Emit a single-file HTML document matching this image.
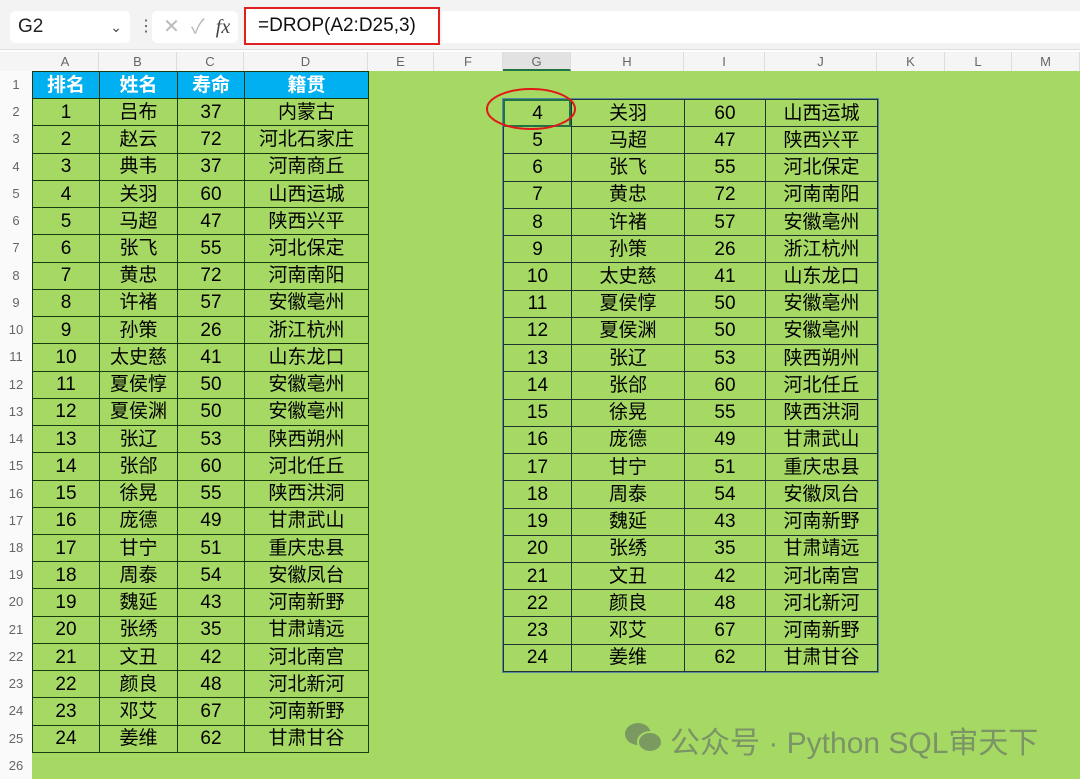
<!DOCTYPE html>
<html><head><meta charset="utf-8"><style>
*{margin:0;padding:0;box-sizing:border-box}
body{width:1080px;height:779px;overflow:hidden;background:#fff;font-family:"Liberation Sans","Noto Sans CJK SC",sans-serif;position:relative}
.top{position:absolute;left:0;top:0;width:1080px;height:50px;background:#f3f3f3;border-bottom:1px solid #ddd}
.nb{position:absolute;left:10px;top:11px;width:120px;height:32px;background:#fff;border-radius:5px;font-size:19px;line-height:32px;padding-left:8px;color:#222}
.nb span{position:absolute;right:8px;top:0;font-size:14px;color:#444}
.ic{position:absolute;left:152px;top:11px;width:86px;height:32px;background:#fff;border-radius:5px;color:#bbb;font-size:20px;line-height:32px}
.fx{position:absolute;left:244px;top:7px;width:196px;height:38px;background:#fff;border:2px solid #e02020;font-size:19px;line-height:34px;padding-left:12px;color:#111}
.fb{position:absolute;left:442px;top:11px;width:638px;height:32px;background:#fff}
.ch{position:absolute;top:52px;left:0;height:19px;width:1080px;background:#f5f5f5;font-size:13px;color:#666}
.ch div{position:absolute;top:0;height:19px;line-height:19px;text-align:center;border-right:1px solid #ddd}
.rh{position:absolute;left:0;top:71px;width:32px;height:708px;background:#fafafa;font-size:13px;color:#666}
.rh div{height:27.24px;line-height:27px;text-align:center}
.grid{position:absolute;left:32px;top:71px;width:1048px;height:708px;background:#a6d864}
table{position:absolute;border-collapse:collapse;font-size:19px;color:#000}
td{height:27.24px;text-align:center;border:1px solid #1a3a10;padding:0;line-height:25px}
.L{left:32px;top:71px}
.L tr:first-child td{background:#00b0f0;color:#fff;font-weight:bold}
.R{left:503px;top:99px;outline:1px solid #5a8aa0}
.R td{border-color:#233}
.wm{position:absolute;top:718px;font-size:30px;color:#7a9466;white-space:nowrap}
</style></head><body>
<div class="top">
<div class="nb">G2<span>⌄</span></div>
<div style="position:absolute;left:138px;top:16px;color:#555;font-size:16px">⋮</div>
<div class="ic">&nbsp;&nbsp;✕&nbsp;&nbsp;✓&nbsp;&nbsp;<i style="color:#444;font-family:'Liberation Serif',serif">fx</i></div>
<div class="fb"></div>
<div class="fx">=DROP(A2:D25,3)</div>
</div>
<div class="ch">
<div style="left:32px;width:67px">A</div><div style="left:99px;width:78px">B</div><div style="left:177px;width:67px">C</div><div style="left:244px;width:124px">D</div><div style="left:368px;width:66px">E</div><div style="left:434px;width:69px">F</div><div style="left:503px;width:68px;background:#e2e2e2;border-bottom:2px solid #217346">G</div><div style="left:571px;width:113px">H</div><div style="left:684px;width:81px">I</div><div style="left:765px;width:112px">J</div><div style="left:877px;width:68px">K</div><div style="left:945px;width:67px">L</div><div style="left:1012px;width:68px">M</div>
</div>
<div class="rh"><div>1</div><div>2</div><div>3</div><div>4</div><div>5</div><div>6</div><div>7</div><div>8</div><div>9</div><div>10</div><div>11</div><div>12</div><div>13</div><div>14</div><div>15</div><div>16</div><div>17</div><div>18</div><div>19</div><div>20</div><div>21</div><div>22</div><div>23</div><div>24</div><div>25</div><div>26</div></div>
<div class="grid"></div>
<table class="L">
<colgroup><col style="width:67px"><col style="width:78px"><col style="width:67px"><col style="width:124px"></colgroup>
<tr><td>排名</td><td>姓名</td><td>寿命</td><td>籍贯</td></tr>
<tr><td>1</td><td>吕布</td><td>37</td><td>内蒙古</td></tr>
<tr><td>2</td><td>赵云</td><td>72</td><td>河北石家庄</td></tr>
<tr><td>3</td><td>典韦</td><td>37</td><td>河南商丘</td></tr>
<tr><td>4</td><td>关羽</td><td>60</td><td>山西运城</td></tr>
<tr><td>5</td><td>马超</td><td>47</td><td>陕西兴平</td></tr>
<tr><td>6</td><td>张飞</td><td>55</td><td>河北保定</td></tr>
<tr><td>7</td><td>黄忠</td><td>72</td><td>河南南阳</td></tr>
<tr><td>8</td><td>许褚</td><td>57</td><td>安徽亳州</td></tr>
<tr><td>9</td><td>孙策</td><td>26</td><td>浙江杭州</td></tr>
<tr><td>10</td><td>太史慈</td><td>41</td><td>山东龙口</td></tr>
<tr><td>11</td><td>夏侯惇</td><td>50</td><td>安徽亳州</td></tr>
<tr><td>12</td><td>夏侯渊</td><td>50</td><td>安徽亳州</td></tr>
<tr><td>13</td><td>张辽</td><td>53</td><td>陕西朔州</td></tr>
<tr><td>14</td><td>张郃</td><td>60</td><td>河北任丘</td></tr>
<tr><td>15</td><td>徐晃</td><td>55</td><td>陕西洪洞</td></tr>
<tr><td>16</td><td>庞德</td><td>49</td><td>甘肃武山</td></tr>
<tr><td>17</td><td>甘宁</td><td>51</td><td>重庆忠县</td></tr>
<tr><td>18</td><td>周泰</td><td>54</td><td>安徽凤台</td></tr>
<tr><td>19</td><td>魏延</td><td>43</td><td>河南新野</td></tr>
<tr><td>20</td><td>张绣</td><td>35</td><td>甘肃靖远</td></tr>
<tr><td>21</td><td>文丑</td><td>42</td><td>河北南宫</td></tr>
<tr><td>22</td><td>颜良</td><td>48</td><td>河北新河</td></tr>
<tr><td>23</td><td>邓艾</td><td>67</td><td>河南新野</td></tr>
<tr><td>24</td><td>姜维</td><td>62</td><td>甘肃甘谷</td></tr>
</table>
<table class="R">
<colgroup><col style="width:68px"><col style="width:113px"><col style="width:81px"><col style="width:112px"></colgroup>
<tr><td>4</td><td>关羽</td><td>60</td><td>山西运城</td></tr>
<tr><td>5</td><td>马超</td><td>47</td><td>陕西兴平</td></tr>
<tr><td>6</td><td>张飞</td><td>55</td><td>河北保定</td></tr>
<tr><td>7</td><td>黄忠</td><td>72</td><td>河南南阳</td></tr>
<tr><td>8</td><td>许褚</td><td>57</td><td>安徽亳州</td></tr>
<tr><td>9</td><td>孙策</td><td>26</td><td>浙江杭州</td></tr>
<tr><td>10</td><td>太史慈</td><td>41</td><td>山东龙口</td></tr>
<tr><td>11</td><td>夏侯惇</td><td>50</td><td>安徽亳州</td></tr>
<tr><td>12</td><td>夏侯渊</td><td>50</td><td>安徽亳州</td></tr>
<tr><td>13</td><td>张辽</td><td>53</td><td>陕西朔州</td></tr>
<tr><td>14</td><td>张郃</td><td>60</td><td>河北任丘</td></tr>
<tr><td>15</td><td>徐晃</td><td>55</td><td>陕西洪洞</td></tr>
<tr><td>16</td><td>庞德</td><td>49</td><td>甘肃武山</td></tr>
<tr><td>17</td><td>甘宁</td><td>51</td><td>重庆忠县</td></tr>
<tr><td>18</td><td>周泰</td><td>54</td><td>安徽凤台</td></tr>
<tr><td>19</td><td>魏延</td><td>43</td><td>河南新野</td></tr>
<tr><td>20</td><td>张绣</td><td>35</td><td>甘肃靖远</td></tr>
<tr><td>21</td><td>文丑</td><td>42</td><td>河北南宫</td></tr>
<tr><td>22</td><td>颜良</td><td>48</td><td>河北新河</td></tr>
<tr><td>23</td><td>邓艾</td><td>67</td><td>河南新野</td></tr>
<tr><td>24</td><td>姜维</td><td>62</td><td>甘肃甘谷</td></tr>
</table>
<div style="position:absolute;left:503px;top:99px;width:68px;height:28px;border:2px solid #217346"></div>
<svg style="position:absolute;left:484px;top:86px" width="96" height="46"><ellipse cx="47" cy="23" rx="44" ry="20" fill="none" stroke="#e01818" stroke-width="2"/></svg>
<svg style="position:absolute;left:623px;top:720px" width="42" height="36"><ellipse cx="15" cy="14" rx="13" ry="11" fill="#7a9a62"/><ellipse cx="27" cy="22" rx="12" ry="10" fill="#7a9a62" stroke="#a6d864" stroke-width="2"/></svg>
<div class="wm" style="left:670px">公众号 · Python SQL审天下</div>
</body></html>
